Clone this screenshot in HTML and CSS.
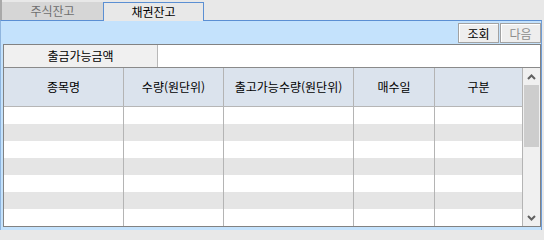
FILE: index.html
```html
<!DOCTYPE html>
<html lang="ko">
<head>
<meta charset="utf-8">
<link rel="stylesheet" href="styles.css">
</head>
<body>
<div class="app">
  <div class="tabs">
    <div class="edge"></div>
    <div class="tab">주식잔고</div>
    <div class="tab active">채권잔고</div>
  </div>
  <div class="panel">
    <div class="toolbar">
      <button class="btn">조회</button>
      <button class="btn disabled">다음</button>
    </div>
    <div class="grid">
      <div class="summary">
        <div class="label">출금가능금액</div>
        <div class="value"></div>
      </div>
      <div class="body">
        <div class="table">
          <div class="row head">
            <div class="c c1">종목명</div>
            <div class="c c2">수량(원단위)</div>
            <div class="c c3">출고가능수량(원단위)</div>
            <div class="c c4">매수일</div>
            <div class="c c5">구분</div>
          </div>
          <div class="row"><div class="c c1"></div><div class="c c2"></div><div class="c c3"></div><div class="c c4"></div><div class="c c5"></div></div>
          <div class="row alt"><div class="c c1"></div><div class="c c2"></div><div class="c c3"></div><div class="c c4"></div><div class="c c5"></div></div>
          <div class="row"><div class="c c1"></div><div class="c c2"></div><div class="c c3"></div><div class="c c4"></div><div class="c c5"></div></div>
          <div class="row alt"><div class="c c1"></div><div class="c c2"></div><div class="c c3"></div><div class="c c4"></div><div class="c c5"></div></div>
          <div class="row"><div class="c c1"></div><div class="c c2"></div><div class="c c3"></div><div class="c c4"></div><div class="c c5"></div></div>
          <div class="row alt"><div class="c c1"></div><div class="c c2"></div><div class="c c3"></div><div class="c c4"></div><div class="c c5"></div></div>
          <div class="row"><div class="c c1"></div><div class="c c2"></div><div class="c c3"></div><div class="c c4"></div><div class="c c5"></div></div>
        </div>
        <div class="scrollbar">
          <div class="arrow"><svg width="9" height="6" viewBox="0 0 9 6"><path d="M1 5 L4.5 1.5 L8 5" fill="none" stroke="#606060" stroke-width="2"/></svg></div>
          <div class="thumb"></div>
          <div class="track"></div>
          <div class="arrow down"><svg width="9" height="6" viewBox="0 0 9 6"><path d="M1 1 L4.5 4.5 L8 1" fill="none" stroke="#606060" stroke-width="2"/></svg></div>
        </div>
      </div>
    </div>
  </div>
</div>
</body>
</html>
```

FILE: styles.css
```css
html, body {
  margin: 0;
  padding: 0;
}
body {
  width: 544px;
  height: 230px;
  overflow: hidden;
  background: #e8e8e8;
  font-family: "Noto Sans CJK KR", "Noto Sans", sans-serif;
  font-size: 12px;
  color: #000;
}
.app {
  width: 544px;
  height: 230px;
}
.tabs {
  display: flex;
  align-items: flex-end;
  height: 20px;
}
.edge {
  width: 2px;
  height: 20px;
  background: #a9a9a9;
}
.tab {
  width: 101px;
  height: 18px;
  line-height: 18px;
  text-align: center;
  background: #d6d6d6;
  color: #6e6e6e;
  box-sizing: border-box;
}
.tab.active {
  width: 101px;
  height: 19px;
  line-height: 18px;
  background: #e8e8e8;
  color: #000;
  border: 1px solid #5b8fd3;
  border-bottom: none;
  margin-bottom: -1px;
  position: relative;
}
.panel {
  width: 540px;
  height: 209px;
  border-top: 1px solid #5b8fd3;
  border-left: 1px solid #8fb5de;
  border-right: 1px solid #6f9dd6;
  background: #c4e2fc;
}
.toolbar {
  display: flex;
  justify-content: flex-end;
  gap: 1px;
  padding-top: 2px;
  height: 20px;
}
.btn {
  width: 41px;
  height: 20px;
  margin: 0;
  padding: 0;
  border: 1px solid #a2a2a2;
  background: #eeeeee;
  box-shadow: inset 1px 1px 0 #ffffff;
  font-family: inherit;
  font-size: 12px;
  line-height: 17px;
  color: #000;
}
.btn.disabled {
  color: #8c8c8c;
}
.grid {
  margin-top: 1px;
  margin-left: 2px;
  width: 536px;
  height: 181px;
  border: 1px solid #828282;
  background: #ffffff;
}
.summary {
  display: flex;
  height: 22px;
  border-bottom: 1px solid #8a8a8a;
}
.label {
  width: 153px;
  border-right: 1px solid #b8b8b8;
  background: #f0f0f0;
  text-align: center;
  line-height: 22px;
}
.value {
  flex: 1;
  background: #ffffff;
}
.body {
  display: flex;
  height: 158px;
}
.table {
  width: 519px;
}
.row {
  display: flex;
  height: 17px;
  background: #ffffff;
}
.row.alt {
  background: #e5e5e5;
}
.row.head {
  height: 38px;
  background: #dbe3ed;
  border-bottom: 1px solid #b6b6b6;
}
.c {
  box-sizing: border-box;
  border-right: 1px solid #b4b4b4;
  text-align: center;
}
.head .c {
  line-height: 38px;
}
.c1 { width: 120px; }
.c2 { width: 100px; }
.c3 { width: 130px; }
.c4 { width: 81px; }
.c5 { width: 88px; }
.scrollbar {
  width: 17px;
  display: flex;
  flex-direction: column;
  background: #f0f0f0;
}
.arrow {
  height: 17px;
  display: flex;
  align-items: center;
  justify-content: center;
}
.thumb {
  height: 62px;
  margin: 0 1px;
  background: #cdcdcd;
}
.track {
  flex: 1;
}
.arrow.down {
  height: 17px;
}
```
